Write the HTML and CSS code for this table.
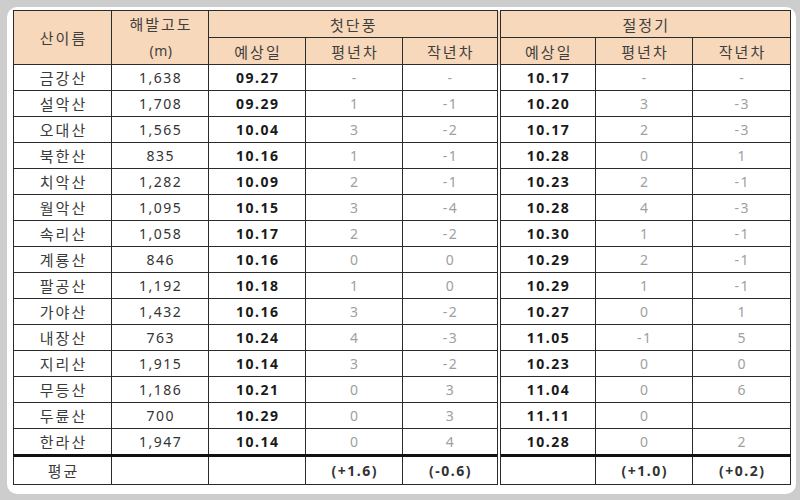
FILE: index.html
```html
<!DOCTYPE html>
<html lang="ko">
<head>
<meta charset="utf-8">
<link rel="stylesheet" href="styles.css">
</head>
<body>
<div class="card">
<table class="tbl">
<colgroup>
<col class="c1"><col class="c2"><col class="c3"><col class="c4"><col class="c5"><col class="c6"><col class="c7"><col class="c8">
</colgroup>
<thead>
<tr class="h1">
<th rowspan="2" class="name-h">산이름</th>
<th rowspan="2" class="alt-h">해발고도<br><span class="unit">(m)</span></th>
<th colspan="3" class="sep">첫단풍</th>
<th colspan="3">절정기</th>
</tr>
<tr class="h2">
<th>예상일</th><th>평년차</th><th class="sep">작년차</th>
<th>예상일</th><th>평년차</th><th>작년차</th>
</tr>
</thead>
<tbody>
<tr><td class="nm">금강산</td><td class="al">1,638</td><td class="dt">09.27</td><td class="df">-</td><td class="df sep">-</td><td class="dt">10.17</td><td class="df">-</td><td class="df">-</td></tr>
<tr><td class="nm">설악산</td><td class="al">1,708</td><td class="dt">09.29</td><td class="df">1</td><td class="df sep">-1</td><td class="dt">10.20</td><td class="df">3</td><td class="df">-3</td></tr>
<tr><td class="nm">오대산</td><td class="al">1,565</td><td class="dt">10.04</td><td class="df">3</td><td class="df sep">-2</td><td class="dt">10.17</td><td class="df">2</td><td class="df">-3</td></tr>
<tr><td class="nm">북한산</td><td class="al">835</td><td class="dt">10.16</td><td class="df">1</td><td class="df sep">-1</td><td class="dt">10.28</td><td class="df">0</td><td class="df">1</td></tr>
<tr><td class="nm">치악산</td><td class="al">1,282</td><td class="dt">10.09</td><td class="df">2</td><td class="df sep">-1</td><td class="dt">10.23</td><td class="df">2</td><td class="df">-1</td></tr>
<tr><td class="nm">월악산</td><td class="al">1,095</td><td class="dt">10.15</td><td class="df">3</td><td class="df sep">-4</td><td class="dt">10.28</td><td class="df">4</td><td class="df">-3</td></tr>
<tr><td class="nm">속리산</td><td class="al">1,058</td><td class="dt">10.17</td><td class="df">2</td><td class="df sep">-2</td><td class="dt">10.30</td><td class="df">1</td><td class="df">-1</td></tr>
<tr><td class="nm">계룡산</td><td class="al">846</td><td class="dt">10.16</td><td class="df">0</td><td class="df sep">0</td><td class="dt">10.29</td><td class="df">2</td><td class="df">-1</td></tr>
<tr><td class="nm">팔공산</td><td class="al">1,192</td><td class="dt">10.18</td><td class="df">1</td><td class="df sep">0</td><td class="dt">10.29</td><td class="df">1</td><td class="df">-1</td></tr>
<tr><td class="nm">가야산</td><td class="al">1,432</td><td class="dt">10.16</td><td class="df">3</td><td class="df sep">-2</td><td class="dt">10.27</td><td class="df">0</td><td class="df">1</td></tr>
<tr><td class="nm">내장산</td><td class="al">763</td><td class="dt">10.24</td><td class="df">4</td><td class="df sep">-3</td><td class="dt">11.05</td><td class="df">-1</td><td class="df">5</td></tr>
<tr><td class="nm">지리산</td><td class="al">1,915</td><td class="dt">10.14</td><td class="df">3</td><td class="df sep">-2</td><td class="dt">10.23</td><td class="df">0</td><td class="df">0</td></tr>
<tr><td class="nm">무등산</td><td class="al">1,186</td><td class="dt">10.21</td><td class="df">0</td><td class="df sep">3</td><td class="dt">11.04</td><td class="df">0</td><td class="df">6</td></tr>
<tr><td class="nm">두륜산</td><td class="al">700</td><td class="dt">10.29</td><td class="df">0</td><td class="df sep">3</td><td class="dt">11.11</td><td class="df">0</td><td class="df"></td></tr>
<tr><td class="nm">한라산</td><td class="al">1,947</td><td class="dt">10.14</td><td class="df">0</td><td class="df sep">4</td><td class="dt">10.28</td><td class="df">0</td><td class="df">2</td></tr>
<tr class="avg"><td class="nm">평균</td><td></td><td></td><td class="av">(+1.6)</td><td class="av sep">(-0.6)</td><td></td><td class="av">(+1.0)</td><td class="av">(+0.2)</td></tr>
</tbody>
</table>
</div>
</body>
</html>
```

FILE: styles.css
```css
html, body {
  margin: 0;
  padding: 0;
}
body {
  background: #cdcdcd;
  padding: 7px 4px 6px 7px;
  width: 800px;
  height: 500px;
  box-sizing: border-box;
  font-family: "Noto Sans", "Noto Sans CJK KR", sans-serif;
}
.card {
  background: #ffffff;
  border-radius: 10px;
  padding: 3px 6px 3px 6px;
  height: 487px;
  box-sizing: border-box;
}
.tbl {
  width: 777px;
  border-collapse: collapse;
  table-layout: fixed;
  font-size: 14px;
  letter-spacing: 1.5px;
  color: #333;
}
.c1 { width: 98px; }
.c2 { width: 97px; }
.c3 { width: 97px; }
.c4 { width: 97px; }
.c5 { width: 96px; }
.c6 { width: 97px; }
.c7 { width: 97px; }
.c8 { width: 98px; }
.tbl th, .tbl td {
  border: 1.5px solid #2b2b2b;
  text-align: center;
  padding: 0 0 0 1.5px;
  white-space: nowrap;
}
.tbl th {
  background: #f8d8ba;
  font-weight: normal;
  color: #3f3f3f;
  font-family: "Noto Sans CJK KR", "Noto Sans", sans-serif;
  font-size: 15px;
  letter-spacing: 2px;
  padding-left: 2px;
}
.h1 th { height: 25px; }
.h2 th { height: 25px; }
.alt-h { line-height: 26px; }
.unit {
  font-family: "Noto Sans", sans-serif;
  font-size: 14px;
  letter-spacing: 0.5px;
}
.tbl .sep { border-right: 4px double #2b2b2b; }
.tbl td { height: 25px; }
.tbl td.nm {
  font-family: "Noto Sans CJK KR", "Noto Sans", sans-serif;
  color: #3a3a3a;
  font-size: 15px;
  letter-spacing: 2px;
  padding-left: 2px;
}
.al { color: #333; }
.dt { font-weight: bold; color: #1a1a1a; }
.df { color: #a0a0a0; }
.avg td {
  border-top: 3px solid #111;
  height: 27px;
}
.av { font-weight: bold; color: #333; }
```
